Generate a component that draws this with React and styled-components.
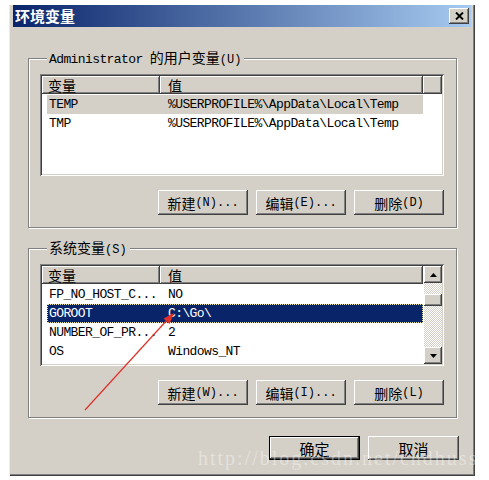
import React from "react";
import styled, { createGlobalStyle } from "styled-components";

const MONO = `"Liberation Mono", "Noto Sans CJK SC", monospace`;
const CJK = `"Noto Sans CJK SC", "Liberation Sans", sans-serif`;

const GlobalStyle = createGlobalStyle`
  html, body {
    margin: 0;
    background: #fff;
  }
  body {
    font-family: ${MONO};
    color: #000;
  }
`;

const Page = styled.div`
  position: relative;
  width: 489px;
  height: 480px;
  overflow: hidden;
  padding-top: 5px;
  box-sizing: border-box;
`;

const Window = styled.div`
  position: relative;
  margin-left: 9px;
  width: 466px;
  height: 471px;
  box-sizing: border-box;
  padding: 0 4px 4px 4px;
  background: #d4d0c8;
  box-shadow: inset 1px 0 #ecebe6, inset -1px -1px #404040,
    inset -2px -2px #808080;
  overflow: hidden;
`;

const TitleBar = styled.div`
  height: 22px;
  display: flex;
  align-items: center;
  justify-content: space-between;
  padding: 0 2px;
  background: linear-gradient(to right, #0a246a, #a6caf0);
`;

const Title = styled.span`
  font-family: ${CJK};
  font-weight: 700;
  font-size: 15px;
  line-height: 22px;
  color: #fff;
`;

const CloseButton = styled.div`
  width: 20px;
  height: 16px;
  box-sizing: border-box;
  display: flex;
  align-items: center;
  justify-content: center;
  background: #d4d0c8;
  box-shadow: inset -1px -1px #404040, inset 1px 1px #fff,
    inset -2px -2px #808080;
`;

const Body = styled.div`
  display: flex;
  flex-direction: column;
  padding: 22px 14px 0 15px;
`;

const Group = styled.fieldset`
  margin: 0;
  padding: 6px 12px 12px 11px;
  min-width: 0;
  border: 1px solid #808080;
  box-shadow: inset 1px 1px #fff, 1px 1px #fff;
  & + & {
    margin-top: 11px;
  }
`;

const Legend = styled.legend`
  margin-left: 7px;
  padding: 0 3px 0 2px;
  line-height: 16px;
  background: #d4d0c8;
`;

const Latin = styled.span`
  font-family: ${MONO};
  font-size: ${(p) => p.$size || 13}px;
  letter-spacing: ${(p) => (p.$size ? 0 : -0.6)}px;
`;

const Han = styled.span`
  font-family: ${CJK};
  font-size: ${(p) => p.$size || 14}px;
`;

const ListView = styled.div`
  height: 102px;
  box-sizing: border-box;
  padding: 2px;
  display: flex;
  background: #fff;
  box-shadow: inset 1px 1px #808080, inset -1px -1px #fff,
    inset 2px 2px #404040, inset -2px -2px #d4d0c8;
`;

const ListMain = styled.div`
  flex: 1;
  min-width: 0;
  display: flex;
  flex-direction: column;
`;

const Header = styled.div`
  display: flex;
  height: 18px;
`;

const HeaderCell = styled.div`
  flex: ${(p) => (p.$w ? "none" : 1)};
  width: ${(p) => (p.$w ? `${p.$w}px` : "auto")};
  box-sizing: border-box;
  padding-left: ${(p) => p.$pad || 0}px;
  background: #d4d0c8;
  box-shadow: inset -1px -1px #404040, inset 1px 1px #fff,
    inset -2px -2px #808080;
  font-family: ${CJK};
  font-size: 14px;
  line-height: 18px;
  white-space: nowrap;
`;

const Rows = styled.div`
  padding-top: 1px;
`;

const Row = styled.div`
  display: flex;
  height: 19px;
  width: 376px;
  margin-left: 5px;
  align-items: center;
  white-space: nowrap;
  background: ${(p) =>
    p.$selected ? "#0a246a" : p.$inactive ? "#d4d0c8" : "transparent"};
  color: ${(p) => (p.$selected ? "#fff" : "#000")};
  outline: ${(p) => (p.$selected ? "1px dotted #e8e4a0" : "none")};
  outline-offset: -1px;
`;

const Cell = styled.div`
  flex: ${(p) => (p.$w ? "none" : 1)};
  width: ${(p) => (p.$w ? `${p.$w}px` : "auto")};
  box-sizing: border-box;
  padding-left: ${(p) => p.$pad}px;
  font-family: ${MONO};
  font-size: 13px;
  letter-spacing: -0.6px;
  overflow: hidden;
`;

const ScrollBar = styled.div`
  width: 18px;
  display: flex;
  flex-direction: column;
`;

const ScrollArrow = styled.div`
  height: 17px;
  display: flex;
  align-items: center;
  justify-content: center;
  background: #d4d0c8;
  box-shadow: inset -1px -1px #404040, inset 1px 1px #fff,
    inset -2px -2px #808080;
`;

const Track = styled.div`
  flex: 1;
  background: repeating-conic-gradient(#fff 0 25%, #d4d0c8 0 50%) 0 0 / 2px
    2px;
`;

const Thumb = styled.div`
  height: 12px;
  margin-top: 11px;
  background: #d4d0c8;
  box-shadow: inset -1px -1px #404040, inset 1px 1px #fff,
    inset -2px -2px #808080;
`;

const ButtonRow = styled.div`
  display: flex;
  justify-content: flex-end;
  gap: 8px;
  margin-top: ${(p) => p.$top || 14}px;
  margin-right: ${(p) => p.$right || 0}px;
`;

const Button = styled.div`
  width: ${(p) => p.$w || 90}px;
  height: ${(p) => p.$h || 25}px;
  box-sizing: border-box;
  display: flex;
  align-items: center;
  justify-content: center;
  background: #d4d0c8;
  box-shadow: ${(p) =>
    p.$default
      ? "inset 0 0 0 1px #000, inset -2px -2px #404040, inset 2px 2px #fff, inset -3px -3px #808080"
      : "inset -1px -1px #404040, inset 1px 1px #fff, inset -2px -2px #808080"};
  white-space: nowrap;
`;

const Watermark = styled.div`
  position: absolute;
  left: 189px;
  top: 443px;
  font-family: "Liberation Serif", serif;
  font-size: 20px;
  line-height: 20px;
  letter-spacing: 2px;
  color: rgba(255, 255, 255, 0.38);
  white-space: nowrap;
  pointer-events: none;
`;

const Overlay = styled.svg`
  position: absolute;
  left: 0;
  top: 0;
  pointer-events: none;
`;

const userVars = [
  { name: "TEMP", value: "%USERPROFILE%\\AppData\\Local\\Temp", inactive: true },
  { name: "TMP", value: "%USERPROFILE%\\AppData\\Local\\Temp" },
];

const systemVars = [
  { name: "FP_NO_HOST_C...", value: "NO" },
  { name: "GOROOT", value: "C:\\Go\\", selected: true },
  { name: "NUMBER_OF_PR...", value: "2" },
  { name: "OS", value: "Windows_NT" },
];

const Arrow = ({ up }) => (
  <svg width="7" height="4" viewBox="0 0 7 4">
    <path d={up ? "M3.5 0 L7 4 L0 4 Z" : "M0 0 L7 0 L3.5 4 Z"} fill="#000" />
  </svg>
);

const VarList = ({ rows, scroll }) => (
  <ListView>
    <ListMain>
      <Header>
        <HeaderCell $w={118} $pad={6}>变量</HeaderCell>
        <HeaderCell $w={263} $pad={8}>值</HeaderCell>
        {!scroll && <HeaderCell />}
      </Header>
      <Rows>
        {rows.map((r) => (
          <Row key={r.name} $selected={r.selected} $inactive={r.inactive}>
            <Cell $w={113} $pad={2}>{r.name}</Cell>
            <Cell $pad={8}>{r.value}</Cell>
          </Row>
        ))}
      </Rows>
    </ListMain>
    {scroll && (
      <ScrollBar>
        <ScrollArrow>
          <Arrow up />
        </ScrollArrow>
        <Track>
          <Thumb />
        </Track>
        <ScrollArrow>
          <Arrow />
        </ScrollArrow>
      </ScrollBar>
    )}
  </ListView>
);

const Actions = ({ keys }) => (
  <ButtonRow>
    <Button>
      <Han>新建</Han>
      <Latin $size={12}>({keys[0]})...</Latin>
    </Button>
    <Button>
      <Han>编辑</Han>
      <Latin $size={12}>({keys[1]})...</Latin>
    </Button>
    <Button>
      <Han>删除</Han>
      <Latin $size={12}>({keys[2]})</Latin>
    </Button>
  </ButtonRow>
);

const App = () => {
  return (
    <Page>
      <GlobalStyle />
      <Window>
        <TitleBar>
          <Title>环境变量</Title>
          <CloseButton>
            <svg width="9" height="8" viewBox="0 0 9 8">
              <path d="M1 0.5 L8 7.5 M8 0.5 L1 7.5" stroke="#000" strokeWidth="1.9" />
            </svg>
          </CloseButton>
        </TitleBar>
        <Body>
          <Group>
            <Legend>
              <Latin>Administrator </Latin>
              <Han>的用户变量</Han>
              <Latin $size={12}>(U)</Latin>
            </Legend>
            <VarList rows={userVars} />
            <Actions keys={["N", "E", "D"]} />
          </Group>
          <Group>
            <Legend>
              <Han>系统变量</Han>
              <Latin $size={12}>(S)</Latin>
            </Legend>
            <VarList rows={systemVars} scroll />
            <Actions keys={["W", "I", "L"]} />
          </Group>
          <ButtonRow $top={18} $right={-2}>
            <Button $default $w={91} $h={24}>
              <Han $size={15}>确定</Han>
            </Button>
            <Button $w={91} $h={24}>
              <Han $size={15}>取消</Han>
            </Button>
          </ButtonRow>
        </Body>
        <Watermark>http://blog.csdn.net/cndhuss</Watermark>
      </Window>
      <Overlay width="489" height="480" viewBox="0 0 489 480">
        <line x1="85" y1="410" x2="168" y2="319" stroke="#e0302a" strokeWidth="1.2" />
        <path d="M174 313 L169.5 324 L163.5 318.5 Z" fill="#e0302a" />
      </Overlay>
    </Page>
  );
};

export default App;
